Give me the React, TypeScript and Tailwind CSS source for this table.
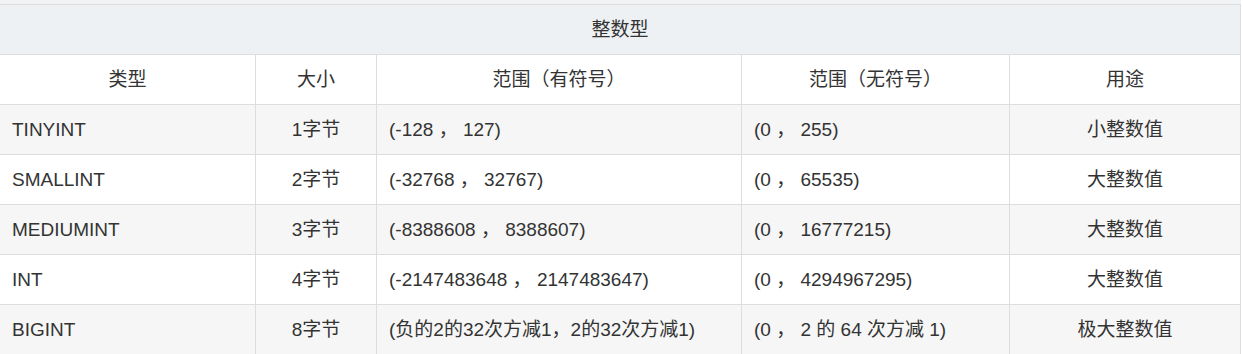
const rows = [
  { type: "TINYINT", size: "1字节", signed: "(-128 ， 127)", unsigned: "(0 ， 255)", use: "小整数值" },
  { type: "SMALLINT", size: "2字节", signed: "(-32768 ， 32767)", unsigned: "(0 ， 65535)", use: "大整数值" },
  { type: "MEDIUMINT", size: "3字节", signed: "(-8388608 ， 8388607)", unsigned: "(0 ， 16777215)", use: "大整数值" },
  { type: "INT", size: "4字节", signed: "(-2147483648 ， 2147483647)", unsigned: "(0 ， 4294967295)", use: "大整数值" },
  { type: "BIGINT", size: "8字节", signed: "(负的2的32次方减1，2的32次方减1)", unsigned: "(0 ， 2 的 64 次方减 1)", use: "极大整数值" },
];

const cell = "h-full flex items-center pt-[2px] border-r border-[#dddddd]";

export default function App() {
  return (
    <div
      className="w-[1243px] h-[354px] overflow-hidden bg-white text-[19px] text-[#333333]"
      style={{ fontFamily: '"Liberation Sans", Arial, "Noto Sans CJK SC", sans-serif' }}
    >
      <div className="h-[4px] w-[1241px] bg-[#f1f3f5]" />
      <div className="w-[1241px] border-t border-[#dddddd]">
        <div className="h-[50px] flex items-center justify-center pt-[2px] bg-[#eef1f4] border-b border-r border-[#dddddd]">
          整数型
        </div>
        <div className="h-[50px] flex border-b border-[#dddddd] bg-white">
          <div className={`${cell} w-[256px] justify-center`}>类型</div>
          <div className={`${cell} w-[121px] justify-center`}>大小</div>
          <div className={`${cell} w-[365px] justify-center`}>范围（有符号）</div>
          <div className={`${cell} w-[268px] justify-center`}>范围（无符号）</div>
          <div className={`${cell} w-[231px] justify-center`}>用途</div>
        </div>
        {rows.map((r, i) => (
          <div
            key={r.type}
            className={`h-[50px] flex border-b border-[#dddddd] ${i % 2 === 0 ? "bg-[#f6f6f6]" : "bg-white"}`}
          >
            <div className={`${cell} w-[256px] pl-[12px]`}>{r.type}</div>
            <div className={`${cell} w-[121px] justify-center`}>{r.size}</div>
            <div className={`${cell} w-[365px] pl-[12px] whitespace-pre`}>{r.signed}</div>
            <div className={`${cell} w-[268px] pl-[12px] whitespace-pre`}>{r.unsigned}</div>
            <div className={`${cell} w-[231px] justify-center`}>{r.use}</div>
          </div>
        ))}
      </div>
    </div>
  );
}
